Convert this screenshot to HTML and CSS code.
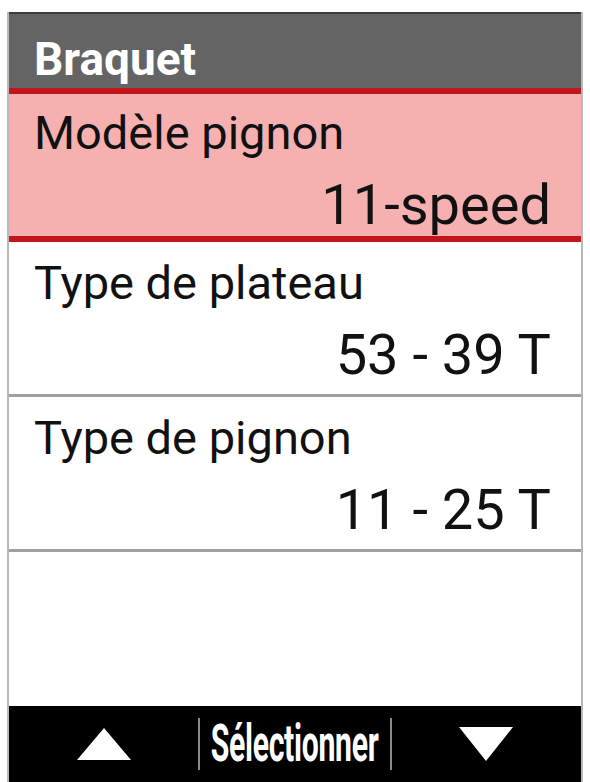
FILE: index.html
```html
<!DOCTYPE html>
<html lang="fr">
<head>
<meta charset="utf-8">
<title>Braquet</title>
<link rel="stylesheet" href="styles.css">
</head>
<body>
<div class="device">
  <div class="header">Braquet</div>
  <div class="row selected">
    <div class="label">Modèle pignon</div>
    <div class="value">11-speed</div>
  </div>
  <div class="row">
    <div class="label">Type de plateau</div>
    <div class="value">53 - 39 T</div>
  </div>
  <div class="row">
    <div class="label">Type de pignon</div>
    <div class="value">11 - 25 T</div>
  </div>
  <div class="empty"></div>
  <div class="bar">
    <div class="cell">
      <svg class="tri" width="56" height="34" viewBox="0 0 56 34"><polygon points="28,1 55,33 1,33" fill="#fff"/></svg>
    </div>
    <div class="sep"></div>
    <div class="cell"><span class="select">Sélectionner</span></div>
    <div class="sep"></div>
    <div class="cell">
      <svg class="tri" width="56" height="36" viewBox="0 0 56 36"><polygon points="1,1 55,1 28,35" fill="#fff"/></svg>
    </div>
  </div>
</div>
</body>
</html>
```
FILE: styles.css
```css
html, body {
  margin: 0;
  padding: 0;
  background: #ffffff;
}
body {
  font-family: Roboto, "Noto Sans", sans-serif;
  width: 590px;
  height: 782px;
  overflow: hidden;
}
.device {
  margin: 12px 0 0 7px;
  width: 572px;
  height: 770px;
  border-left: 2px solid #b8b8b8;
  border-right: 2px solid #b8b8b8;
  display: flex;
  flex-direction: column;
  background: #fff;
}
.header {
  height: 76px;
  box-sizing: border-box;
  padding: 22px 0 0 25px;
  background: #646464;
  border-top: 2px solid #3c3c3c;
  color: #ffffff;
  font-weight: 700;
  font-size: 46px;
  line-height: 46px;
}
.row {
  box-sizing: border-box;
  padding: 14px 30px 0 25px;
  border-bottom: 3px solid #a0a0a0;
  height: 155px;
  color: #111;
}
.row.selected {
  background: #f6b0b0;
  border-top: 6px solid #c0161c;
  border-bottom: 6px solid #c0161c;
  height: 154px;
  padding-top: 12px;
}
.label {
  font-size: 47px;
  line-height: 54px;
}
.value {
  margin-top: 15px;
  font-size: 56px;
  line-height: 60px;
  text-align: right;
}
.empty {
  flex: 1;
}
.bar {
  height: 76px;
  background: #000;
  display: flex;
  align-items: center;
}
.cell {
  flex: 1 1 0;
  min-width: 0;
  display: flex;
  justify-content: center;
  align-items: center;
}
.sep {
  width: 2px;
  height: 52px;
  background: #8a8a8a;
}
.tri {
  display: block;
}
.select {
  display: inline-block;
  color: #fff;
  font-weight: 700;
  font-size: 52px;
  line-height: 52px;
  transform: scaleX(0.58);
  white-space: nowrap;
  letter-spacing: -0.5px;
}
```
